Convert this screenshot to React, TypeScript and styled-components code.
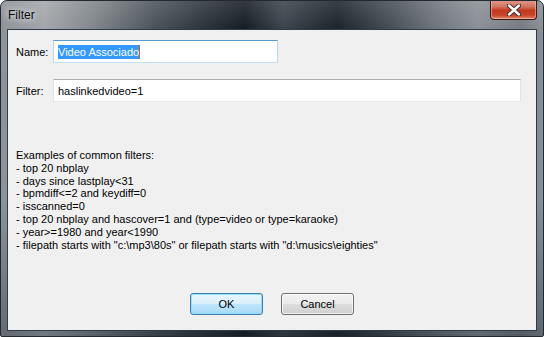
import * as React from "react";
import styled, { createGlobalStyle } from "styled-components";

const GlobalStyle = createGlobalStyle`
  html, body {
    margin: 0;
    padding: 0;
    background: #ffffff;
  }
`;

const Window = styled.div`
  width: 544px;
  height: 337px;
  box-sizing: border-box;
  display: flex;
  flex-direction: column;
  border: 1px solid #22292f;
  border-radius: 7px 7px 2px 2px;
  overflow: hidden;
  background:
    linear-gradient(
      180deg,
      rgba(255, 255, 255, 0.12) 0%,
      rgba(255, 255, 255, 0) 28px,
      rgba(120, 140, 160, 0.15) 60%,
      rgba(20, 30, 40, 0.35) 100%
    ),
    linear-gradient(
      90deg,
      #8d9298 0%,
      #a3a7ab 8%,
      #7c8287 18%,
      #4c545b 28%,
      #2a3239 38%,
      #161d24 45%,
      #3b444c 52%,
      #1c242b 62%,
      #474f56 72%,
      #6d747a 80%,
      #8a9096 88%,
      #767c82 96%,
      #8a9096 100%
    );
`;

const TitleBar = styled.div`
  height: 28px;
  display: flex;
  align-items: center;
  padding-left: 7px;
`;

const Title = styled.span`
  font-family: "Liberation Sans", Arial, sans-serif;
  font-size: 12px;
  color: #0b0b0b;
  margin-top: -1px;
  text-shadow: 0 0 6px rgba(255, 255, 255, 0.9), 0 0 10px rgba(255, 255, 255, 0.6);
`;

const CloseButton = styled.div`
  margin-left: auto;
  margin-right: 6px;
  align-self: flex-start;
  margin-top: -1px;
  width: 47px;
  height: 20px;
  box-sizing: border-box;
  display: flex;
  align-items: center;
  justify-content: center;
  border: 1px solid #3a1a14;
  border-top: none;
  border-radius: 0 0 4px 4px;
  background: linear-gradient(
    180deg,
    #e19b8a 0%,
    #d27462 35%,
    #c23a1f 55%,
    #c9452a 80%,
    #df8a6e 100%
  );
  box-shadow: inset 0 0 0 1px rgba(255, 220, 210, 0.45);
`;

const Client = styled.div`
  flex: 1;
  margin: 0 6px 5px 6px;
  border: 1px solid #2f3b46;
  background: #f0f0f0;
  display: flex;
  flex-direction: column;
  padding: 10px 15px 15px 8px;
  font-family: "Liberation Sans", Arial, sans-serif;
  font-size: 11px;
  color: #000000;
`;

const FieldRow = styled.div<{ $gap: number }>`
  display: flex;
  align-items: center;
  margin-bottom: ${(p) => p.$gap}px;
`;

const Label = styled.label`
  width: 37px;
  flex-shrink: 0;
`;

const TextBox = styled.div<{ $width: number; $focused?: boolean }>`
  width: ${(p) => p.$width}px;
  height: 23px;
  box-sizing: border-box;
  display: flex;
  align-items: center;
  padding-left: 4px;
  background: #ffffff;
  border: 1px solid ${(p) => (p.$focused ? "#b8d6ec" : "#e2e3ea")};
  border-top-color: ${(p) => (p.$focused ? "#5b9ac9" : "#abadb3")};
  border-bottom-color: ${(p) => (p.$focused ? "#c5e1f3" : "#e3e9ef")};
  white-space: nowrap;
`;

const Selection = styled.span`
  background: #3399ff;
  color: #ffffff;
  padding: 1px 0;
`;

const Caret = styled.span`
  display: inline-block;
  width: 1px;
  height: 14px;
  background: #cc6600;
`;

const Examples = styled.div`
  line-height: 12.8px;
  white-space: pre;
`;

const ButtonRow = styled.div`
  margin-top: auto;
  display: flex;
  justify-content: center;
  gap: 18px;
  padding-left: 7px;
`;

const Button = styled.button<{ $default?: boolean }>`
  width: 73px;
  height: 22px;
  box-sizing: border-box;
  border-radius: 3px;
  font-family: "Liberation Sans", Arial, sans-serif;
  font-size: 11px;
  color: #000000;
  padding: 0;
  border: 1px solid ${(p) => (p.$default ? "#3c7fb1" : "#707070")};
  background: ${(p) =>
    p.$default
      ? "linear-gradient(180deg, #eaf6fd 0%, #d9f0fc 48%, #bee6fd 52%, #a7d9f5 100%)"
      : "linear-gradient(180deg, #f2f2f2 0%, #ebebeb 48%, #dddddd 52%, #cfcfcf 100%)"};
  box-shadow: inset 0 0 0 1px
    ${(p) => (p.$default ? "rgba(140, 220, 250, 0.9)" : "rgba(255, 255, 255, 0.7)")};
`;

const examples = [
  "Examples of common filters:",
  "- top 20 nbplay",
  "- days since lastplay<31",
  "- bpmdiff<=2 and keydiff=0",
  "- isscanned=0",
  "- top 20 nbplay and hascover=1 and (type=video or type=karaoke)",
  "- year>=1980 and year<1990",
  '- filepath starts with "c:\\mp3\\80s" or filepath starts with "d:\\musics\\eighties"',
];

const CloseIcon = () => (
  <svg width="14" height="12" viewBox="0 0 14 12">
    <path
      d="M2 1.5 L12 10.5 M12 1.5 L2 10.5"
      stroke="#3b2b28"
      strokeWidth="4.4"
      strokeLinecap="round"
    />
    <path
      d="M2 1.5 L12 10.5 M12 1.5 L2 10.5"
      stroke="#ffffff"
      strokeWidth="2.4"
      strokeLinecap="round"
    />
  </svg>
);

const App: React.FC = () => {
  return (
    <>
      <GlobalStyle />
      <Window>
        <TitleBar>
          <Title>Filter</Title>
          <CloseButton>
            <CloseIcon />
          </CloseButton>
        </TitleBar>
        <Client>
          <FieldRow $gap={16}>
            <Label>Name:</Label>
            <TextBox $width={225} $focused>
              <Selection>Video Associado</Selection>
              <Caret />
            </TextBox>
          </FieldRow>
          <FieldRow $gap={47}>
            <Label>Filter:</Label>
            <TextBox $width={468}>haslinkedvideo=1</TextBox>
          </FieldRow>
          <Examples>{examples.join("\n")}</Examples>
          <ButtonRow>
            <Button $default>OK</Button>
            <Button>Cancel</Button>
          </ButtonRow>
        </Client>
      </Window>
    </>
  );
};

export default App;
